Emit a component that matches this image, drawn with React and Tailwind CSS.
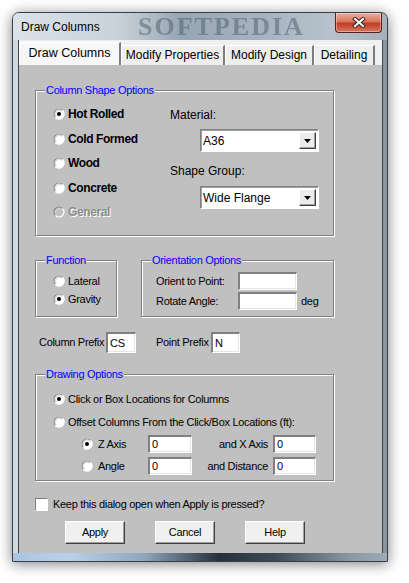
import React from 'react'

const small = "text-[11px] tracking-[-0.3px]"

function Radio({ checked, disabled }) {
  return (
    <svg width="12" height="12" viewBox="0 0 12 12" className="shrink-0">
      <circle cx="6" cy="6" r="5.5" fill={disabled ? '#c0c0c0' : '#fff'} />
      <path d="M2.46 9.54A5 5 0 0 1 9.54 2.46" fill="none" stroke="#8a8a8a" strokeWidth="1.2" />
      <path d="M3.2 8.8A4 4 0 0 1 8.8 3.2" fill="none" stroke="#d6d6d6" strokeWidth="1" />
      <path d="M9.54 2.46A5 5 0 0 1 2.46 9.54" fill="none" stroke="#ffffff" strokeWidth="1.2" />
      {checked && <circle cx="6" cy="6" r="2" fill="#000" />}
    </svg>
  )
}

function Group({ title, className = '', children }) {
  return (
    <div className={`relative border border-[#808080] shadow-[inset_1px_1px_0_#ffffff,1px_1px_0_#ffffff] ${className}`}>
      <span className={`absolute -top-[8px] left-[9px] bg-[#c0c0c0] px-px leading-[14px] text-[#0000ff] ${small}`}>
        {title}
      </span>
      {children}
    </div>
  )
}

function Field({ value = '', className = '' }) {
  return (
    <div className={`flex items-center border-t-2 border-l-2 border-r border-b border-t-[#808080] border-l-[#808080] border-r-white border-b-white bg-white pl-[2px] shadow-[inset_-1px_-1px_0_#e4e4e4] ${small} ${className}`}>
      {value}
    </div>
  )
}

function Select({ value }) {
  return (
    <div className="flex h-[23px] w-[119px] items-center border-t border-l border-r border-b border-t-[#808080] border-l-[#808080] border-r-white border-b-white bg-white shadow-[inset_1px_1px_0_#a0a0a0]">
      <span className="flex-1 pl-[2px] text-[12px]">{value}</span>
      <div className="mr-[2px] flex h-[17px] w-[17px] items-center justify-center border border-t-white border-l-white border-r-[#404040] border-b-[#404040] bg-[#ececec] shadow-[inset_-1px_-1px_0_#a0a0a0]">
        <svg width="7" height="4" viewBox="0 0 7 4">
          <path d="M0 0H7L3.5 4Z" fill="#000" />
        </svg>
      </div>
    </div>
  )
}

function Btn({ children }) {
  return (
    <button className={`h-[23px] w-[60px] border border-t-white border-l-white border-r-[#404040] border-b-[#404040] bg-[#f0f0f0] shadow-[inset_-1px_-1px_0_#a0a0a0] text-black ${small}`}>
      {children}
    </button>
  )
}

const tabs = [
  { label: 'Draw Columns', w: 'w-[102px]', active: true },
  { label: 'Modify Properties', w: 'w-[104px]' },
  { label: 'Modify Design', w: 'w-[89px]' },
  { label: 'Detailing', w: 'w-[61px]' },
]

const shapes = [
  { label: 'Hot Rolled', checked: true },
  { label: 'Cold Formed' },
  { label: 'Wood' },
  { label: 'Concrete' },
  { label: 'General', disabled: true },
]

export default function App() {
  return (
    <div className="min-h-[583px] bg-white pl-3 pt-3 font-['Liberation_Sans',Arial,sans-serif] text-black">
      <div className="relative flex h-[550px] w-[376px] flex-col overflow-hidden rounded-t-[7px] border border-[#35404a] bg-[linear-gradient(90deg,#d2dae1_0%,#bfc9d2_40%,#a3afba_70%,#8995a0_100%)] shadow-[0_2px_14px_rgba(0,0,0,0.5)]">
        {/* title bar */}
        <div className="relative flex h-[27px] shrink-0 items-center bg-[linear-gradient(90deg,#dbe2e8_0%,#c9d2da_28%,#98a6b2_45%,#a9b6c1_70%,#b7c2cc_85%,#a4b0bb_100%)]">
          <span className="pl-[8px] text-[12px] text-black">Draw Columns</span>
          <span className="pointer-events-none absolute left-[125px] top-[1px] font-['Liberation_Serif',serif] text-[26px] font-bold leading-[26px] tracking-[2px] text-[#4c5b69]/50 blur-[0.6px]">
            SOFTPEDIA
          </span>
          <div className="flex-1" />
          <div className="relative mr-[5px] -mt-[8px] flex h-[20px] w-[47px] items-center justify-center rounded-b-[4px] border border-t-0 border-[#5a2218] bg-[linear-gradient(180deg,#eab0a2_0%,#d9735b_45%,#c13c24_55%,#d77a60_100%)] shadow-[inset_0_0_0_1px_rgba(255,255,255,0.35)]">
            <svg width="14" height="11" viewBox="0 0 14 11">
              <path d="M3 2L11 9M11 2L3 9" stroke="#3b2a28" strokeWidth="4" strokeLinecap="square" />
              <path d="M3 2L11 9M11 2L3 9" stroke="#ffffff" strokeWidth="2" strokeLinecap="square" />
            </svg>
          </div>
        </div>

        {/* client area */}
        <div className="ml-[6px] flex h-[513px] w-[363px] shrink-0 flex-col shadow-[0_0_0_1px_#3b4651]">
          <div className="flex h-[25px] items-end bg-[#f0f0f0]">
            {tabs.map(t => (
              <div
                key={t.label}
                className={`flex items-center justify-center border-l border-t border-r-2 border-l-white border-t-white border-r-[#7d7d7d] text-black ${t.w} ${
                  t.active ? 'h-[23px] bg-[#f7f7f7] pb-[2px] text-[12.5px]' : 'h-[20px] bg-[#eeeeee] pb-[1px] text-[12px]'
                }`}
              >
                {t.label}
              </div>
            ))}
          </div>

          <div className="flex flex-1 flex-col bg-[#c0c0c0] pl-4 pt-[25px]">
            <Group title="Column Shape Options" className="flex h-[146px] w-[299px]">
              <div className="flex w-[134px] flex-col pl-[17px] pt-[11px]">
                {shapes.map(s => (
                  <div key={s.label} className="flex h-[24.5px] items-center gap-[3px]">
                    <Radio checked={s.checked} disabled={s.disabled} />
                    <span
                      className={`text-[12px] font-bold tracking-[-0.4px] ${
                        s.disabled ? 'text-[#8c8c8c] [text-shadow:1px_1px_0_#ffffff]' : 'text-black'
                      }`}
                    >
                      {s.label}
                    </span>
                  </div>
                ))}
              </div>
              <div className="flex flex-col pt-[16px]">
                <span className="h-4 text-[12px] leading-4">Material:</span>
                <div className="ml-[30px] mt-[6px]">
                  <Select value="A36" />
                </div>
                <span className="mt-[11px] h-4 text-[12px] leading-4">Shape Group:</span>
                <div className="ml-[30px] mt-[7px]">
                  <Select value="Wide Flange" />
                </div>
              </div>
            </Group>

            <div className="mt-[24px] flex gap-[24px]">
              <Group title="Function" className="h-[57px] w-[82px]">
                <div className="flex flex-col pl-[17px] pt-[11px]">
                  {[['Lateral', false], ['Gravity', true]].map(([l, c]) => (
                    <div key={l} className="flex h-[18px] items-center gap-[3px]">
                      <Radio checked={c} />
                      <span className={small}>{l}</span>
                    </div>
                  ))}
                </div>
              </Group>
              <Group title="Orientation Options" className="h-[57px] w-[193px]">
                <div className="flex flex-col pl-[14px] pt-[11px]">
                  <div className="flex h-[18px] items-center">
                    <span className={`w-[82px] ${small}`}>Orient to Point:</span>
                    <Field className="h-[18px] w-[59px]" />
                  </div>
                  <div className="mt-[2px] flex h-[18px] items-center">
                    <span className={`w-[82px] ${small}`}>Rotate Angle:</span>
                    <Field className="h-[18px] w-[59px]" />
                    <span className={`ml-[4px] ${small}`}>deg</span>
                  </div>
                </div>
              </Group>
            </div>

            <div className="mt-[15px] flex h-[21px] items-center pl-[4px]">
              <span className={`w-[67px] ${small}`}>Column Prefix</span>
              <Field value="CS" className="h-[21px] w-[30px]" />
              <span className={`ml-[20px] w-[55px] ${small}`}>Point Prefix</span>
              <Field value="N" className="h-[21px] w-[29px]" />
            </div>

            <Group title="Drawing Options" className="mt-[21px] h-[107px] w-[299px]">
              <div className="flex flex-col pt-[12px]">
                <div className="flex h-[24px] items-center gap-[3px] pl-[17px]">
                  <Radio checked />
                  <span className={small}>Click or Box Locations for Columns</span>
                </div>
                <div className="flex h-[22px] items-center gap-[3px] pl-[17px]">
                  <Radio />
                  <span className={small}>Offset Columns From the Click/Box Locations (ft):</span>
                </div>
                <div className="flex h-[22px] items-center pl-[45px]">
                  <Radio checked />
                  <span className={`ml-[5px] w-[50px] ${small}`}>Z Axis</span>
                  <Field value="0" className="h-[18px] w-[44px]" />
                  <span className={`w-[76px] text-right ${small}`}>and X Axis</span>
                  <Field value="0" className="ml-[5px] h-[18px] w-[43px]" />
                </div>
                <div className="flex h-[22px] items-center pl-[45px]">
                  <Radio />
                  <span className={`ml-[5px] w-[50px] ${small}`}>Angle</span>
                  <Field value="0" className="h-[18px] w-[44px]" />
                  <span className={`w-[76px] text-right ${small}`}>and Distance</span>
                  <Field value="0" className="ml-[5px] h-[18px] w-[43px]" />
                </div>
              </div>
            </Group>

            <div className="mt-[17px] flex h-[13px] items-center gap-[5px]">
              <div className="h-[13px] w-[13px] border border-t-[#808080] border-l-[#808080] border-r-white border-b-white bg-white" />
              <span className={small}>Keep this dialog open when Apply is pressed?</span>
            </div>

            <div className="ml-[30px] mt-[10px] flex gap-[30px]">
              <Btn>Apply</Btn>
              <Btn>Cancel</Btn>
              <Btn>Help</Btn>
            </div>
          </div>
        </div>

        <div className="mt-auto h-[8px] bg-[linear-gradient(90deg,#a9c3e0_0%,#b9d0ea_15%,#8fa6bd_35%,#26313a_55%,#3d4a55_70%,#8a98a5_90%,#9eabb6_100%)]" />
      </div>
    </div>
  )
}
